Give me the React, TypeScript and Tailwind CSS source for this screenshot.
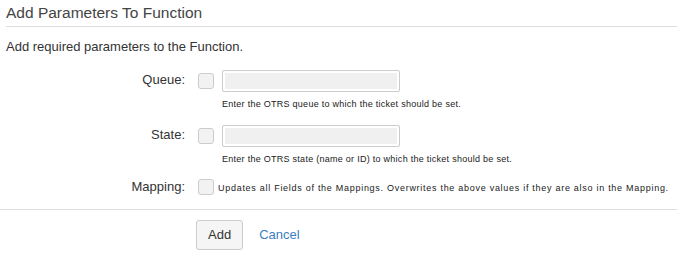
import React from "react";

const font = { fontFamily: '"Liberation Sans", Arial, sans-serif' };

function Field({ label, help }: { label: string; help: string }) {
  return (
    <div className="flex flex-col">
      <div className="flex items-center h-[22px]">
        <label className="w-[185px] text-right text-[13px] text-[#333] -mt-[2px]">{label}</label>
        <span className="ml-[13px] w-[16px] h-[16px] rounded-[3px] border border-[#ccc] bg-[#f2f2f2]" />
        <input
          className="ml-[8px] w-[178px] h-[22px] border border-[#ccc] rounded-[2px] bg-[#f0f0f0] shadow-[inset_0_0_0_2px_#fff] outline-none"
          type="text"
        />
      </div>
      <div className="ml-[222px] mt-[6px] text-[9px] tracking-[0.03em] text-[#222]">{help}</div>
    </div>
  );
}

export default function App() {
  return (
    <div className="w-[677px] h-[257px] bg-white text-[#333] overflow-hidden" style={font}>
      <div className="pl-[6px] pt-[3px]">
        <h2 className="text-[15.5px] font-normal leading-[20px] text-[#444] pb-[3px] border-b border-[#ddd]">
          Add Parameters To Function
        </h2>
      </div>
      <p className="pl-[6px] mt-[12px] text-[13px] leading-[16px]">Add required parameters to the Function.</p>
      <div className="mt-[15px] flex flex-col gap-[13px]">
        <Field label="Queue:" help="Enter the OTRS queue to which the ticket should be set." />
        <Field label="State:" help="Enter the OTRS state (name or ID) to which the ticket should be set." />
      </div>
      <div className="mt-[12px] flex items-center h-[18px]">
        <label className="w-[185px] text-right text-[13px] text-[#333]">Mapping:</label>
        <span className="ml-[13px] w-[16px] h-[16px] rounded-[3px] border border-[#ccc] bg-[#f2f2f2]" />
        <span className="ml-[4px] mt-[4px] text-[9px] tracking-[0.08em] text-[#222]">
          Updates all Fields of the Mappings. Overwrites the above values if they are also in the Mapping.
        </span>
      </div>
      <div className="mt-[13px] border-t border-[#ddd] pt-[10px] pl-[196px] flex items-center">
        <button className="h-[30px] px-[11px] border border-[#ccc] rounded-[3px] bg-[#f5f5f5] text-[13px] text-[#333]">
          Add
        </button>
        <a className="ml-[16px] text-[13px] text-[#3a7ebf]" href="#">
          Cancel
        </a>
      </div>
    </div>
  );
}
